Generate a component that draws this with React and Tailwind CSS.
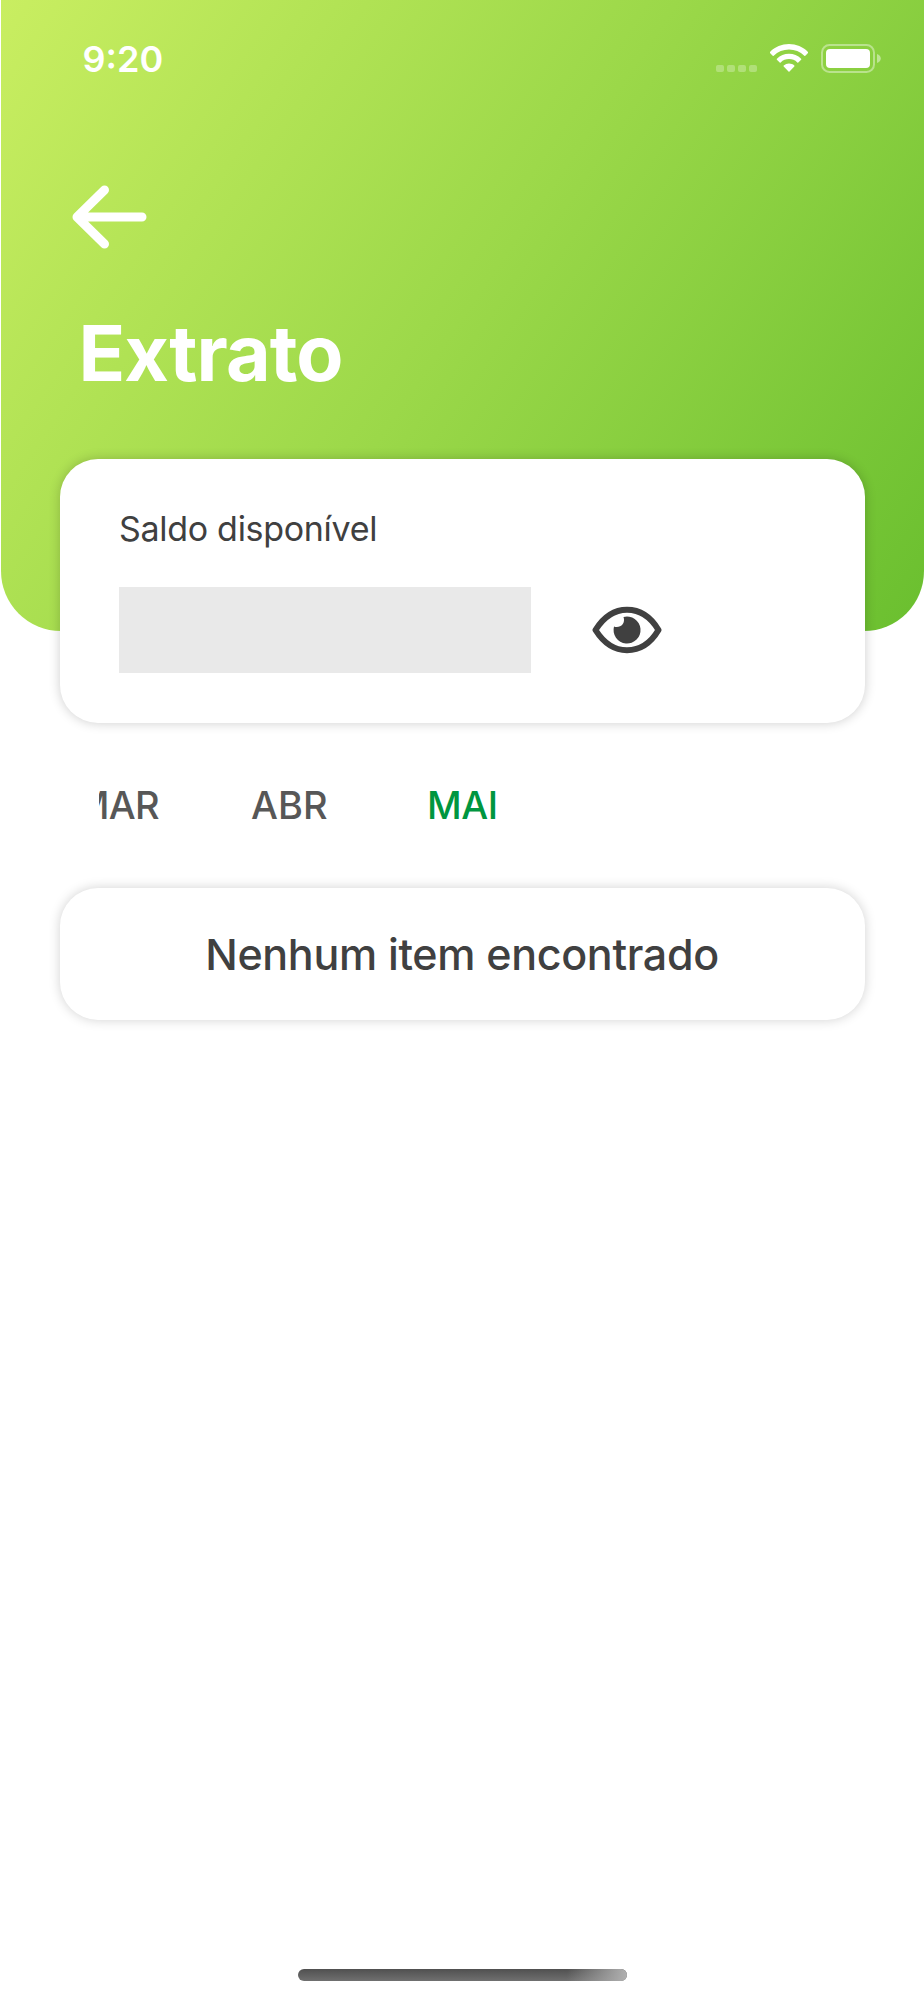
const months = [
  { label: "MAR", className: "w-[60px] justify-end overflow-hidden tracking-[-0.7px] text-[#575757]" },
  { label: "ABR", className: "ml-[92px] w-[76px] text-[#575757]" },
  { label: "MAI", className: "ml-[100px] tracking-[-0.4px] text-[#009640]" },
];

export default function App() {
  return (
    <div className="w-[924px] h-[2000px] bg-white flex flex-col overflow-hidden font-['Inter',sans-serif] text-[#404040]">
      <header className="mx-[0.5px] h-[631px] shrink-0 rounded-b-[60px] bg-[linear-gradient(124.3deg,#c9ee61_0%,#9bd849_50%,#6abf2f_100%)] text-white">
        <StatusBar />

        <button className="block mt-[92px] ml-[70px]" aria-label="Voltar">
          <svg width="76" height="66" viewBox="0 0 76 66" fill="none" stroke="currentColor" strokeWidth="9" strokeLinecap="round" strokeLinejoin="round">
            <path d="M33.5 6 6 33 33.5 60M6.500 33H71" />
          </svg>
        </button>

        <h1 className="mt-[55px] ml-[78px] text-[77px] leading-[96px] font-bold tracking-[-0.9px]">Extrato</h1>
      </header>

      <section className="-mt-[172px] ml-[59.5px] mr-[59.5px] h-[263.5px] shrink-0 rounded-[38px] bg-white shadow-[0_0_12px_rgba(0,0,0,0.2)] pl-[59.5px] pt-[48px]">
        <p className="text-[34px] leading-[44px] tracking-[-0.3px]">Saldo disponível</p>
        <div className="flex items-center mt-9">
          <div className="w-[412px] h-[86px] bg-[#e9e9e9]" />
          <EyeIcon />
        </div>
      </section>

      <nav className="mt-[54.500px] ml-[99px] h-[56px] flex text-[38px] leading-[56px] font-medium">
        {months.map((m) => (
          <span key={m.label} className={`flex ${m.className}`}>
            {m.label}
          </span>
        ))}
      </nav>

      <section className="mt-[55px] mx-[59.5px] h-[132px] shrink-0 rounded-[38px] bg-white shadow-[0_0_12px_rgba(0,0,0,0.18)] flex items-center justify-center">
        <p className="text-[43px] font-medium whitespace-nowrap tracking-[-0.33px]">Nenhum item encontrado</p>
      </section>

      {/* Home indicator */}
      <div className="mt-auto mb-[19px] ml-[298px] w-[329px] h-3 shrink-0 rounded-full bg-linear-to-b from-[#505050] to-[#707070] overflow-hidden">
        <div className="ml-auto w-[60px] h-full bg-linear-to-r from-transparent to-[#b0b0b0]" />
      </div>
    </div>
  );
}

function StatusBar() {
  return (
    <div className="h-[92px] pl-[82px] pr-[43px] pt-[25px] flex items-center justify-between">
      <span className="text-[36px] font-semibold">9:20</span>

      <div className="flex items-center">
        <svg width="42" height="8" viewBox="0 0 42 8" fill="#fff" fillOpacity="0.28" className="mt-[20px]">
          <rect width="8" height="7" rx="2" />
          <rect x="11" width="8" height="7" rx="2" />
          <rect x="22" width="8" height="7" rx="2" />
          <rect x="33" width="8" height="7" rx="2" />
        </svg>

        <svg width="38" height="28" viewBox="0 0 38 28" fill="#fff" className="ml-[12px] -mt-px">
          <path d="M19 0C26.200 0 33 2.800 38 7.900q.5.500 0 1L35.300 11.700q-.5.500-1 0A22 22 0 0 0 3.700 11.700q-.5.500-1 0L0 8.900q-.5-.5 0-1C5 2.800 11.800 0 19 0Z" />
          <path d="M19 9.800c4.600 0 8.900 1.800 12.100 4.900q.5.500 0 1l-2.800 2.700q-.5.500-1 0a12 12 0 0 0-16.600 0q-.5.500-1 0l-2.800-2.700q-.5-.5 0-1A17.300 17.300 0 0 1 19 9.800Z" />
          <path d="M19 19.500c2 0 3.900.7 5.300 1.900q.5.500 0 1l-4.800 5q-.5.500-1 0l-4.800-5q-.5-.5 0-1A8.200 8.200 0 0 1 19 19.500Z" />
        </svg>

        <svg width="60" height="29" viewBox="0 0 60 29" fill="none" className="ml-[13px] -mt-px">
          <rect x="1" y="1" width="52" height="27" rx="7.500" stroke="#fff" strokeOpacity="0.4" strokeWidth="2" />
          <rect x="5" y="5" width="44" height="19" rx="4" fill="#fff" />
          <path d="M56 10c2.300.8 3.800 2.500 3.800 4.500S58.300 18.200 56 19Z" fill="#fff" fillOpacity="0.45" />
        </svg>
      </div>
    </div>
  );
}

function EyeIcon() {
  return (
    <svg width="70" height="48" viewBox="0 0 70 48" className="ml-[61px]">
      <path d="M3.500 24C12 10.500 22 3.800 35 3.800S58.500 10.500 66.500 24C58.500 37.500 48 44.200 35 44.200S12 37.500 3.500 24Z" fill="none" stroke="#404040" strokeWidth="6" strokeLinejoin="round" />
      <path d="M31.500 11a13.500 13.500 0 1 1-9.500 9.500c5.500 2.200 12-2.500 9.500-9.500Z" fill="#404040" />
    </svg>
  );
}
